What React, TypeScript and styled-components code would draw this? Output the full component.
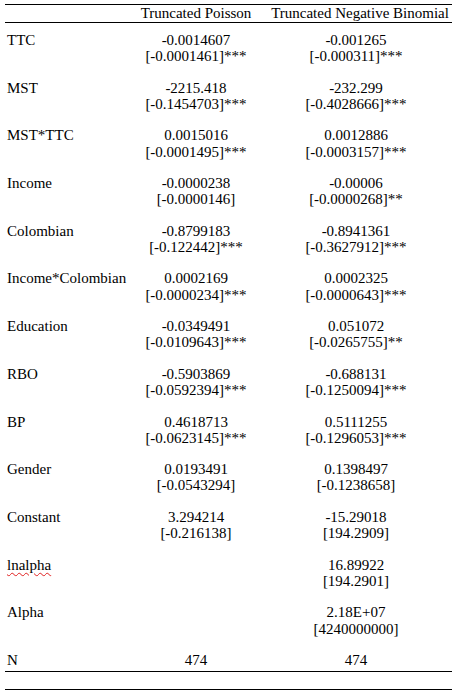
import React, { FC } from 'react';
import styled, { createGlobalStyle } from 'styled-components';

const GlobalStyle = createGlobalStyle`
  html, body {
    margin: 0;
    padding: 0;
    background: #fff;
  }
  body {
    font-family: 'Liberation Serif', 'Times New Roman', serif;
    color: #000;
  }
`;

const Page = styled.div`
  width: 457px;
  height: 692px;
  padding: 4px 5px 0 5px;
  box-sizing: border-box;
  background: #fff;
`;

const Table = styled.div`
  width: 447px;
  font-size: 15px;
  border-top: 1px solid #000;
`;

const Row = styled.div`
  display: grid;
  grid-template-columns: 127px 128px 192px;
`;

const HeaderRow = styled(Row)`
  height: 17px;
  line-height: 16px;
  border-bottom: 1px solid #000;
`;

const Body = styled.div`
  padding-top: 9px;
`;

const DataRow = styled(Row)`
  line-height: 16.25px;
  padding-bottom: 15.2px;
`;

const LastRow = styled(Row)`
  line-height: 16.25px;
  padding-bottom: 3px;
  border-bottom: 1px solid #000;
`;

const Label = styled.div`
  padding-left: 2px;
  white-space: nowrap;
`;

// red squiggle from the word processor's spell check
const SpellWord = styled.span`
  text-decoration: underline wavy #e02020;
  text-decoration-thickness: 1px;
  text-underline-offset: 2px;
`;

const Cell = styled.div<{ $shift?: number }>`
  text-align: center;
  white-space: nowrap;
  padding-left: ${({ $shift }) => ($shift ? `${$shift}px` : '0')};
`;

const Closing = styled.div`
  margin-top: 17px;
  border-top: 1px solid #000;
`;

type Est = [string, string] | null;

const rows: { label: string; a: Est; b: Est; spell?: boolean }[] = [
  { label: 'TTC', a: ['-0.0014607', '[-0.0001461]***'], b: ['-0.001265', '[-0.000311]***'] },
  { label: 'MST', a: ['-2215.418', '[-0.1454703]***'], b: ['-232.299', '[-0.4028666]***'] },
  { label: 'MST*TTC', a: ['0.0015016', '[-0.0001495]***'], b: ['0.0012886', '[-0.0003157]***'] },
  { label: 'Income', a: ['-0.0000238', '[-0.0000146]'], b: ['-0.00006', '[-0.0000268]**'] },
  { label: 'Colombian', a: ['-0.8799183', '[-0.122442]***'], b: ['-0.8941361', '[-0.3627912]***'] },
  { label: 'Income*Colombian', a: ['0.0002169', '[-0.0000234]***'], b: ['0.0002325', '[-0.0000643]***'] },
  { label: 'Education', a: ['-0.0349491', '[-0.0109643]***'], b: ['0.051072', '[-0.0265755]**'] },
  { label: 'RBO', a: ['-0.5903869', '[-0.0592394]***'], b: ['-0.688131', '[-0.1250094]***'] },
  { label: 'BP', a: ['0.4618713', '[-0.0623145]***'], b: ['0.5111255', '[-0.1296053]***'] },
  { label: 'Gender', a: ['0.0193491', '[-0.0543294]'], b: ['0.1398497', '[-0.1238658]'] },
  { label: 'Constant', a: ['3.294214', '[-0.216138]'], b: ['-15.29018', '[194.2909]'] },
  { label: 'lnalpha', a: null, b: ['16.89922', '[194.2901]'], spell: true },
  { label: 'Alpha', a: null, b: ['2.18E+07', '[4240000000]'] },
];

const Estimate: FC<{ value: Est }> = ({ value }) => (
  <Cell>
    {value && (
      <>
        <div>{value[0]}</div>
        <div>{value[1]}</div>
      </>
    )}
  </Cell>
);

export default function App() {
  return (
    <Page>
      <GlobalStyle />
      <Table>
        <HeaderRow>
          <Label />
          <Cell>Truncated Poisson</Cell>
          <Cell $shift={8}>Truncated Negative Binomial</Cell>
        </HeaderRow>
        <Body>
          {rows.map((r) => (
            <DataRow key={r.label}>
              <Label>{r.spell ? <SpellWord>{r.label}</SpellWord> : r.label}</Label>
              <Estimate value={r.a} />
              <Estimate value={r.b} />
            </DataRow>
          ))}
          <LastRow>
            <Label>N</Label>
            <Cell>474</Cell>
            <Cell>474</Cell>
          </LastRow>
        </Body>
        <Closing />
      </Table>
    </Page>
  );
}
